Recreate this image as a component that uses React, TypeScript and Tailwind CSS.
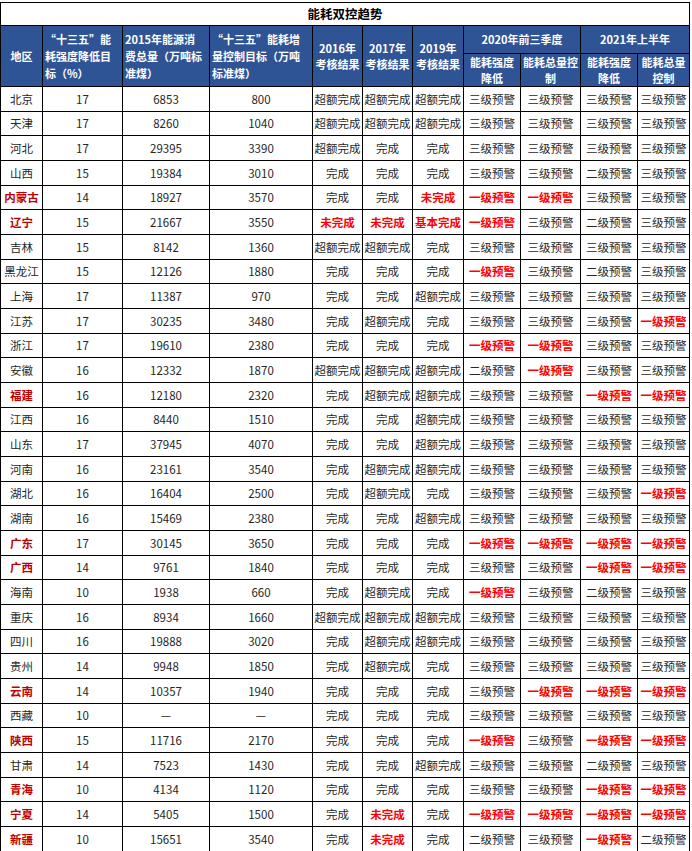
import React from "react";

type Row = {
  name: string;
  hot?: boolean;
  target: string;
  total: string;
  limit: string;
  r2016: string;
  r2017: string;
  r2019: string;
  a2020: string;
  b2020: string;
  a2021: string;
  b2021: string;
};

const ROWS: Row[] = [
  { name: "北京", target: "17", total: "6853", limit: "800", r2016: "超额完成", r2017: "超额完成", r2019: "超额完成", a2020: "三级预警", b2020: "三级预警", a2021: "三级预警", b2021: "三级预警" },
  { name: "天津", target: "17", total: "8260", limit: "1040", r2016: "超额完成", r2017: "超额完成", r2019: "超额完成", a2020: "三级预警", b2020: "三级预警", a2021: "三级预警", b2021: "三级预警" },
  { name: "河北", target: "17", total: "29395", limit: "3390", r2016: "超额完成", r2017: "完成", r2019: "完成", a2020: "三级预警", b2020: "三级预警", a2021: "三级预警", b2021: "三级预警" },
  { name: "山西", target: "15", total: "19384", limit: "3010", r2016: "完成", r2017: "完成", r2019: "完成", a2020: "三级预警", b2020: "三级预警", a2021: "二级预警", b2021: "三级预警" },
  { name: "内蒙古", hot: true, target: "14", total: "18927", limit: "3570", r2016: "完成", r2017: "完成", r2019: "未完成", a2020: "一级预警", b2020: "一级预警", a2021: "三级预警", b2021: "三级预警" },
  { name: "辽宁", hot: true, target: "15", total: "21667", limit: "3550", r2016: "未完成", r2017: "未完成", r2019: "基本完成", a2020: "一级预警", b2020: "三级预警", a2021: "二级预警", b2021: "三级预警" },
  { name: "吉林", target: "15", total: "8142", limit: "1360", r2016: "超额完成", r2017: "超额完成", r2019: "完成", a2020: "三级预警", b2020: "三级预警", a2021: "三级预警", b2021: "三级预警" },
  { name: "黑龙江", target: "15", total: "12126", limit: "1880", r2016: "完成", r2017: "完成", r2019: "完成", a2020: "一级预警", b2020: "三级预警", a2021: "二级预警", b2021: "三级预警" },
  { name: "上海", target: "17", total: "11387", limit: "970", r2016: "完成", r2017: "完成", r2019: "超额完成", a2020: "三级预警", b2020: "三级预警", a2021: "三级预警", b2021: "三级预警" },
  { name: "江苏", target: "17", total: "30235", limit: "3480", r2016: "完成", r2017: "超额完成", r2019: "完成", a2020: "三级预警", b2020: "三级预警", a2021: "三级预警", b2021: "一级预警" },
  { name: "浙江", target: "17", total: "19610", limit: "2380", r2016: "完成", r2017: "完成", r2019: "完成", a2020: "一级预警", b2020: "一级预警", a2021: "三级预警", b2021: "三级预警" },
  { name: "安徽", target: "16", total: "12332", limit: "1870", r2016: "超额完成", r2017: "超额完成", r2019: "超额完成", a2020: "二级预警", b2020: "一级预警", a2021: "三级预警", b2021: "三级预警" },
  { name: "福建", hot: true, target: "16", total: "12180", limit: "2320", r2016: "完成", r2017: "超额完成", r2019: "超额完成", a2020: "三级预警", b2020: "三级预警", a2021: "一级预警", b2021: "一级预警" },
  { name: "江西", target: "16", total: "8440", limit: "1510", r2016: "完成", r2017: "完成", r2019: "超额完成", a2020: "三级预警", b2020: "三级预警", a2021: "三级预警", b2021: "三级预警" },
  { name: "山东", target: "17", total: "37945", limit: "4070", r2016: "完成", r2017: "完成", r2019: "超额完成", a2020: "三级预警", b2020: "三级预警", a2021: "三级预警", b2021: "三级预警" },
  { name: "河南", target: "16", total: "23161", limit: "3540", r2016: "完成", r2017: "超额完成", r2019: "超额完成", a2020: "三级预警", b2020: "三级预警", a2021: "三级预警", b2021: "三级预警" },
  { name: "湖北", target: "16", total: "16404", limit: "2500", r2016: "完成", r2017: "超额完成", r2019: "完成", a2020: "三级预警", b2020: "三级预警", a2021: "三级预警", b2021: "一级预警" },
  { name: "湖南", target: "16", total: "15469", limit: "2380", r2016: "完成", r2017: "完成", r2019: "超额完成", a2020: "三级预警", b2020: "三级预警", a2021: "三级预警", b2021: "三级预警" },
  { name: "广东", hot: true, target: "17", total: "30145", limit: "3650", r2016: "完成", r2017: "完成", r2019: "完成", a2020: "一级预警", b2020: "一级预警", a2021: "一级预警", b2021: "一级预警" },
  { name: "广西", hot: true, target: "14", total: "9761", limit: "1840", r2016: "完成", r2017: "完成", r2019: "完成", a2020: "三级预警", b2020: "三级预警", a2021: "一级预警", b2021: "一级预警" },
  { name: "海南", target: "10", total: "1938", limit: "660", r2016: "完成", r2017: "超额完成", r2019: "完成", a2020: "一级预警", b2020: "三级预警", a2021: "二级预警", b2021: "三级预警" },
  { name: "重庆", target: "16", total: "8934", limit: "1660", r2016: "超额完成", r2017: "超额完成", r2019: "超额完成", a2020: "三级预警", b2020: "三级预警", a2021: "三级预警", b2021: "三级预警" },
  { name: "四川", target: "16", total: "19888", limit: "3020", r2016: "完成", r2017: "超额完成", r2019: "超额完成", a2020: "三级预警", b2020: "三级预警", a2021: "三级预警", b2021: "三级预警" },
  { name: "贵州", target: "14", total: "9948", limit: "1850", r2016: "完成", r2017: "超额完成", r2019: "完成", a2020: "三级预警", b2020: "三级预警", a2021: "三级预警", b2021: "三级预警" },
  { name: "云南", hot: true, target: "14", total: "10357", limit: "1940", r2016: "完成", r2017: "完成", r2019: "完成", a2020: "三级预警", b2020: "一级预警", a2021: "一级预警", b2021: "一级预警" },
  { name: "西藏", target: "10", total: "—", limit: "—", r2016: "完成", r2017: "完成", r2019: "完成", a2020: "三级预警", b2020: "三级预警", a2021: "三级预警", b2021: "三级预警" },
  { name: "陕西", hot: true, target: "15", total: "11716", limit: "2170", r2016: "完成", r2017: "完成", r2019: "完成", a2020: "一级预警", b2020: "三级预警", a2021: "一级预警", b2021: "一级预警" },
  { name: "甘肃", target: "14", total: "7523", limit: "1430", r2016: "完成", r2017: "完成", r2019: "超额完成", a2020: "三级预警", b2020: "三级预警", a2021: "二级预警", b2021: "三级预警" },
  { name: "青海", hot: true, target: "10", total: "4134", limit: "1120", r2016: "完成", r2017: "完成", r2019: "完成", a2020: "三级预警", b2020: "三级预警", a2021: "一级预警", b2021: "一级预警" },
  { name: "宁夏", hot: true, target: "14", total: "5405", limit: "1500", r2016: "完成", r2017: "未完成", r2019: "完成", a2020: "一级预警", b2020: "一级预警", a2021: "一级预警", b2021: "一级预警" },
  { name: "新疆", hot: true, target: "10", total: "15651", limit: "3540", r2016: "完成", r2017: "未完成", r2019: "完成", a2020: "二级预警", b2020: "三级预警", a2021: "一级预警", b2021: "二级预警" },
];

const BAD = ["未完成", "基本完成", "一级预警"];

const head = "bg-[#2f5496] text-white font-bold text-[11px]";

function Cell({ text, h }: { text: string; h: string }) {
  const bad = BAD.includes(text);
  return (
    <div
      className={`${h} flex items-center justify-center whitespace-nowrap bg-white text-[11.5px] ${
        bad ? "font-bold text-[#ff0000]" : "text-[#262626]"
      }`}
    >
      {text}
    </div>
  );
}

export default function App() {
  return (
    <div className="bg-white font-['Noto_Sans_CJK_SC','Noto_Sans',sans-serif]">
      <div className="inline-grid grid-cols-[41px_79px_86px_102px_49px_49px_50px_56px_59px_56px_51px] gap-px bg-black p-px">
        {/* 标题 */}
        <div className="col-span-11 flex h-[22px] items-center justify-center bg-white text-[12.5px] font-bold text-black">
          能耗双控趋势
        </div>

        {/* 表头 */}
        <div className={`${head} row-span-2 flex items-center justify-center`}>地区</div>
        <div className={`${head} row-span-2 flex flex-col justify-center px-[2px] leading-[17px]`}>
          <span>“十三五”能</span>
          <span>耗强度降低目</span>
          <span>标（%）</span>
        </div>
        <div className={`${head} row-span-2 flex flex-col justify-center px-[2px] leading-[17px]`}>
          <span>2015年能源消</span>
          <span>费总量（万吨标</span>
          <span>准煤）</span>
        </div>
        <div className={`${head} row-span-2 flex flex-col justify-center px-[2px] leading-[17px]`}>
          <span>“十三五”能耗增</span>
          <span>量控制目标（万吨</span>
          <span>标准煤）</span>
        </div>
        {["2016年", "2017年", "2019年"].map((y) => (
          <div
            key={y}
            className={`${head} row-span-2 flex flex-col items-center justify-center leading-[16px]`}
          >
            <span>{y}</span>
            <span className="whitespace-nowrap">考核结果</span>
          </div>
        ))}
        <div className={`${head} col-span-2 flex h-[27px] items-center justify-center pb-[2px]`}>2020年前三季度</div>
        <div className={`${head} col-span-2 flex h-[27px] items-center justify-center pb-[2px]`}>2021年上半年</div>
        {[
          ["能耗强度", "降低"],
          ["能耗总量控", "制"],
          ["能耗强度", "降低"],
          ["能耗总量", "控制"],
        ].map(([a, b], i) => (
          <div
            key={i}
            className={`${head} flex h-[32px] flex-col items-center justify-center leading-[16px]`}
          >
            <span className="whitespace-nowrap">{a}</span>
            <span>{b}</span>
          </div>
        ))}

        {/* 数据 */}
        {ROWS.map((r, i) => {
          const h = i % 3 === 1 ? "h-[23px]" : "h-[24px]";
          return (
            <React.Fragment key={r.name}>
              <div
                className={`${h} flex items-center justify-center whitespace-nowrap bg-white text-[11.5px] ${
                  r.hot ? "font-bold text-[#c00000]" : "text-[#262626]"
                }`}
              >
                {r.name}
              </div>
              <Cell h={h} text={r.target} />
              <Cell h={h} text={r.total} />
              <Cell h={h} text={r.limit} />
              <Cell h={h} text={r.r2016} />
              <Cell h={h} text={r.r2017} />
              <Cell h={h} text={r.r2019} />
              <Cell h={h} text={r.a2020} />
              <Cell h={h} text={r.b2020} />
              <Cell h={h} text={r.a2021} />
              <Cell h={h} text={r.b2021} />
            </React.Fragment>
          );
        })}
      </div>
    </div>
  );
}
